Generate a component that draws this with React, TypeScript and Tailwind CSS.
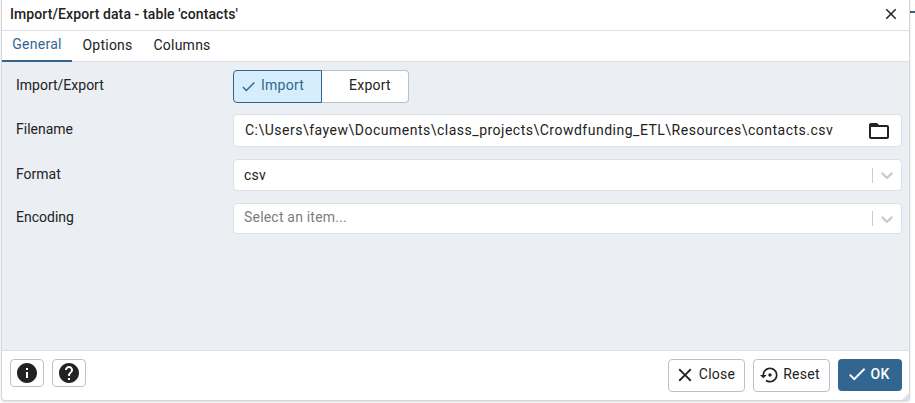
import React from 'react';

const font = { fontFamily: 'Roboto, "Liberation Sans", sans-serif' };

// material icon paths, pgAdmin uses the same set
const ICONS = {
  close: 'M19 6.41L17.59 5 12 10.59 6.41 5 5 6.41 10.59 12 5 17.59 6.41 19 12 13.41 17.59 19 19 17.59 13.41 12z',
  check: 'M9 16.17L4.83 12l-1.42 1.41L9 19 21 7l-1.41-1.41z',
  folder: 'M20 6h-8l-2-2H4c-1.1 0-1.99.9-1.99 2L2 18c0 1.1.9 2 2 2h16c1.1 0 2-.9 2-2V8c0-1.1-.9-2-2-2zm0 12H4V8h16v10z',
  info: 'M12 2C6.48 2 2 6.48 2 12s4.48 10 10 10 10-4.48 10-10S17.52 2 12 2zm1 15h-2v-6h2v6zm0-8h-2V7h2v2z',
  help: 'M12 2C6.48 2 2 6.48 2 12s4.48 10 10 10 10-4.48 10-10S17.52 2 12 2zm1 17h-2v-2h2v2zm2.07-7.75l-.9.92C13.45 12.9 13 13.5 13 15h-2v-.5c0-1.1.45-2.1 1.17-2.83l1.24-1.26c.37-.36.59-.86.59-1.41 0-1.1-.9-2-2-2s-2 .9-2 2H8c0-2.21 1.79-4 4-4s4 1.79 4 4c0 .88-.36 1.68-.93 2.25z',
  restore: 'M14 12c0-1.1-.9-2-2-2s-2 .9-2 2 .9 2 2 2 2-.9 2-2zm-2-9c-4.97 0-9 4.03-9 9H0l4 4 4-4H5c0-3.87 3.13-7 7-7s7 3.13 7 7-3.13 7-7 7c-1.51 0-2.91-.49-4.06-1.3l-1.42 1.44C8.04 20.3 9.94 21 12 21c4.97 0 9-4.03 9-9s-4.03-9-9-9z',
};

const Icon = ({ d, size, className }: { d: string; size: number; className?: string }) => (
  <svg width={size} height={size} viewBox="0 0 24 24" fill="currentColor" className={className}>
    <path d={d} />
  </svg>
);

const Chevron = () => (
  <svg width="20" height="20" viewBox="0 0 20 20" fill="#cccccc" className="ml-[4px] mr-[4px]">
    <path d="M4.516 7.548c0.436-0.446 1.043-0.481 1.576 0l3.908 3.747 3.908-3.747c0.533-0.481 1.141-0.446 1.574 0 0.436 0.445 0.408 1.197 0 1.615-0.406 0.418-4.695 4.502-4.695 4.502-0.217 0.223-0.502 0.335-0.787 0.335s-0.57-0.112-0.789-0.335c0 0-4.287-4.084-4.695-4.502s-0.436-1.17 0-1.615z" />
  </svg>
);

// one labelled row of the General tab
const Row = ({ label, h, mb, labelPt, children }: { label: string; h: string; mb: string; labelPt: string; children: React.ReactNode }) => (
  <div className={`flex ${mb}`}>
    <div className={`w-[231px] pl-[14px] text-[14px] leading-[20px] text-[#222] ${labelPt}`}>{label}</div>
    <div className={`w-[669px] ${h}`}>{children}</div>
  </div>
);

const SelectBox = ({ value, placeholder }: { value?: string; placeholder?: string }) => (
  <div className="flex h-full items-center rounded border border-[#dde0e6] bg-white pl-[10px]">
    <span className={`flex-1 text-[14px] tracking-[0.2px] ${placeholder ? 'pb-[2px] text-[#7d7d7d]' : 'text-[#222]'}`}>{value ?? placeholder}</span>
    <div className="h-[15px] w-px bg-[#cccccc]" />
    <Chevron />
  </div>
);

const IconBtn = ({ d }: { d: string }) => (
  <div className="flex h-[28px] w-[34px] items-center justify-center rounded border border-[#bac1cd] bg-white text-[#222]">
    <Icon d={d} size={24} />
  </div>
);

export default function App() {
  return (
    <div className="relative h-[403px] w-[915px] overflow-hidden bg-white pl-[1px]" style={font}>
      {/* sliver of the page behind the dialog */}
      <div className="absolute right-0 top-[11px] h-[2px] w-[5px] bg-[#326690]" />
      <div className="relative flex h-[401px] w-[909px] flex-col rounded-b border-b border-l border-r border-[#d5d5d5] bg-white shadow-sm">
        {/* title bar */}
        <div className="flex h-[31px] shrink-0 items-center justify-between border-b border-[#dde0e6] pb-[2px] pl-[8px] pr-[9px]">
          <span className="text-[14px] font-medium tracking-[0.1px] text-[#222]">Import/Export data - table 'contacts'</span>
          <Icon d={ICONS.close} size={18} className="text-[#222]" />
        </div>
        {/* tabs */}
        <div className="flex h-[31px] shrink-0 border-b border-[#dde0e6] text-[14px] tracking-[0.25px]">
          <div className="-mb-px flex w-[70px] items-center justify-center border-b-2 border-[#326690] pb-[2px] text-[#326690]">General</div>
          <div className="flex w-[71px] items-center justify-center pb-[2px] text-[#222]">Options</div>
          <div className="flex w-[78px] items-center justify-center pb-[2px] text-[#222]">Columns</div>
        </div>
        {/* form */}
        <div className="flex-1 bg-[#ebeef3] pt-[8px]">
          <Row label="Import/Export" labelPt="pt-[5px]" h="h-[33px]" mb="mb-[11px]">
            <div className="flex h-full w-[176px] text-[14px] tracking-[0.25px]">
              <div className="flex w-[89px] items-center rounded-l border border-[#326690] bg-[#d6eefb] pb-[2px] pl-[6px] text-[#326690]">
                <Icon d={ICONS.check} size={17} className="mr-[4px] mt-[2px]" />
                Import
              </div>
              <div className="flex flex-1 items-center justify-center rounded-r border border-l-0 border-[#bac1cd] bg-white pb-[2px] pl-[10px] text-[#222]">Export</div>
            </div>
          </Row>
          <Row label="Filename" labelPt="pt-[5px]" h="h-[33px]" mb="mb-[12px]">
            <div className="flex h-full items-center justify-between rounded border border-[#dde0e6] bg-white pl-[11px] pr-[10px]">
              <span className="text-[14px] tracking-[0.5px] text-[#222]">C:\Users\fayew\Documents\class_projects\Crowdfunding_ETL\Resources\contacts.csv</span>
              <Icon d={ICONS.folder} size={24} className="text-[#222]" />
            </div>
          </Row>
          <Row label="Format" labelPt="pt-[5px]" h="h-[32px]" mb="mb-[12px]">
            <SelectBox value="csv" />
          </Row>
          <Row label="Encoding" labelPt="pt-[4px]" h="h-[31px]" mb="mb-0">
            <SelectBox placeholder="Select an item..." />
          </Row>
        </div>
        {/* footer */}
        <div className="relative flex h-[50px] shrink-0 items-start justify-between border-t border-[#dde0e6] pl-[8px] pr-[7px] pt-[8px]">
          <div className="flex gap-[8px]">
            <IconBtn d={ICONS.info} />
            <IconBtn d={ICONS.help} />
          </div>
          <div className="flex gap-[8px] text-[14px] tracking-[0.25px]">
            <div className="flex h-[33px] w-[77px] items-center justify-center rounded border border-[#bac1cd] pb-[2px] pr-[4px] text-[#222]">
              <Icon d={ICONS.close} size={22} className="mr-[3px]" />
              Close
            </div>
            <div className="flex h-[33px] w-[77px] items-center justify-center rounded border border-[#bac1cd] pb-[2px] pr-[3px] text-[#222]">
              <Icon d={ICONS.restore} size={20} className="mr-[3px]" />
              Reset
            </div>
            <div className="flex h-[32px] w-[64px] items-center justify-center rounded bg-[#326690] pb-[2px] pr-[5px] font-medium text-white">
              <Icon d={ICONS.check} size={22} className="mr-[3px]" />
              OK
            </div>
          </div>
          {/* resize grip */}
          <svg width="7" height="7" viewBox="0 0 7 7" className="absolute bottom-0 right-0">
            <path d="M7 0V7H0z" fill="#dde0e6" />
          </svg>
        </div>
      </div>
    </div>
  );
}
